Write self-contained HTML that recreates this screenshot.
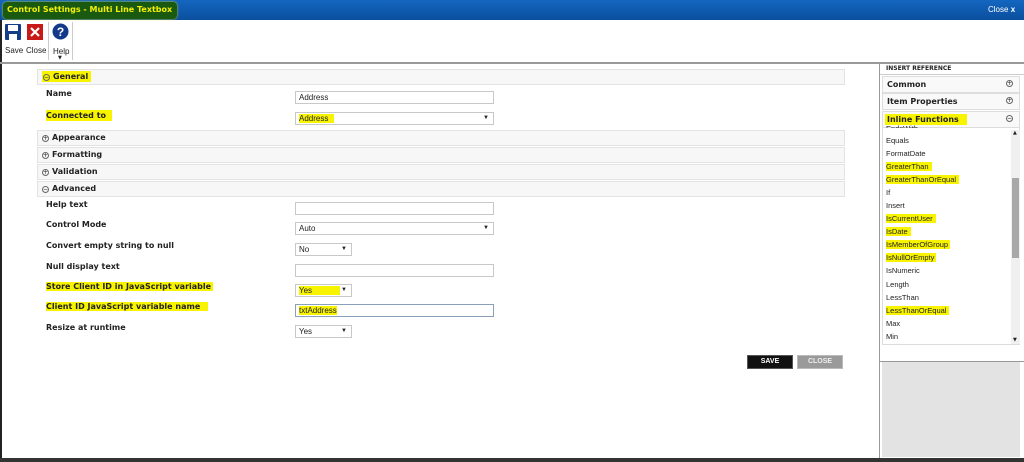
<!DOCTYPE html>
<html><head><style>
*{box-sizing:border-box;margin:0;padding:0}
body{width:1024px;height:462px;overflow:hidden;background:#fff;font-family:"DejaVu Sans","Liberation Sans",sans-serif;font-size:8px;color:#222;position:relative}
.a{position:absolute}
.hl{background:#f8f400}
.sec{position:absolute;left:37px;width:808px;height:16px;background:#f7f7f7;border:1px solid #e3e3e3;font-weight:bold;font-size:8px;line-height:14px;padding-left:4px}
.circ{display:inline-block;width:7px;height:7px;border:1px solid #666;border-radius:50%;font-size:6px;line-height:5px;text-align:center;margin-right:3px;vertical-align:0px;font-weight:normal}
.lbl{position:absolute;left:46px;font-weight:bold;font-size:8px}
.in{position:absolute;left:295px;width:199px;height:13px;border:1px solid #c8c8c8;background:#fff;font-size:8px;line-height:11px;padding-left:3px;font-family:"Liberation Sans",sans-serif}
.sm{width:57px}
.arr{position:absolute;right:4px;top:0;font-size:6px}
.rh{position:absolute;left:882px;width:138px;height:17px;border:1px solid #ddd;background:#f9f9f9;font-weight:bold;font-size:8px;line-height:15px;padding-left:4px}
.rh .circ{position:absolute;right:3px;top:3px}
.li{position:absolute;left:886px;font-size:7.5px;font-family:"Liberation Sans",sans-serif}
</style></head><body>
<div class="a" style="left:0;top:0;width:1024px;height:20px;background:linear-gradient(#1466c0,#0a4f9e)"></div>
<div class="a" style="left:3px;top:2px;width:174px;height:17px;background:#1a5a10;border-radius:4px;box-shadow:0 0 2px #d8d800"></div>
<div class="a" style="left:7px;top:5px;color:#f4f000;font-weight:bold;font-size:8px">Control Settings - Multi Line Textbox</div>
<div class="a" style="left:988px;top:5px;color:#fff;font-size:8px;font-family:'Liberation Sans',sans-serif">Close <b>x</b></div>
<div class="a" style="left:0;top:20px;width:2px;height:442px;background:#222"></div>
<div class="a" style="left:0;top:458px;width:1024px;height:4px;background:#333"></div>
<svg class="a" style="left:5px;top:24px" width="16" height="16"><rect x="0" y="0" width="16" height="16" rx="1" fill="#143e8a"/><rect x="3" y="1" width="10" height="6" fill="#fff"/><rect x="4" y="10" width="8" height="6" fill="#fff"/></svg>
<svg class="a" style="left:27px;top:24px" width="16" height="16"><rect width="16" height="16" fill="#c81818"/><path d="M4 4L12 12M12 4L4 12" stroke="#fff" stroke-width="2.2"/></svg>
<div class="a" style="left:48px;top:22px;width:1px;height:38px;background:#ccc"></div>
<svg class="a" style="left:52px;top:23px" width="17" height="17"><circle cx="8.5" cy="8.5" r="8" fill="#12398a"/><text x="8.5" y="13" text-anchor="middle" fill="#fff" font-size="12" font-weight="bold" font-family="Liberation Sans">?</text></svg>
<div class="a" style="left:72px;top:22px;width:1px;height:38px;background:#ccc"></div>
<div class="a" style="left:5px;top:46px;font-size:8px;font-family:'Liberation Sans',sans-serif">Save</div>
<div class="a" style="left:26px;top:46px;font-size:8px;font-family:'Liberation Sans',sans-serif">Close</div>
<div class="a" style="left:53px;top:47px;font-size:8px;font-family:'Liberation Sans',sans-serif">Help</div>
<div class="a" style="left:58px;top:55px;font-size:5px">▼</div>
<div class="a" style="left:0;top:62px;width:1024px;height:2px;background:#999"></div>
<div class="sec" style="top:69px"><span class="hl" style="padding:1px 3px 1px 1px"><span class="circ">−</span>General</span></div>
<div class="lbl" style="top:89px">Name</div>
<div class="in" style="top:91px">Address</div>
<div class="lbl hl" style="top:110px;padding:1px 6px 1px 0">Connected to</div>
<div class="in" style="top:112px"><span class="hl" style="padding-right:6px">Address</span><span class="arr">▼</span></div>
<div class="sec" style="top:130px"><span class="circ">+</span>Appearance</div>
<div class="sec" style="top:147px"><span class="circ">+</span>Formatting</div>
<div class="sec" style="top:164px"><span class="circ">+</span>Validation</div>
<div class="sec" style="top:181px"><span class="circ">−</span>Advanced</div>
<div class="lbl" style="top:200px">Help text</div>
<div class="in" style="top:202px"></div>
<div class="lbl" style="top:220px">Control Mode</div>
<div class="in" style="top:222px">Auto<span class="arr">▼</span></div>
<div class="lbl" style="top:241px">Convert empty string to null</div>
<div class="in sm" style="top:243px">No<span class="arr">▼</span></div>
<div class="lbl" style="top:262px">Null display text</div>
<div class="in" style="top:264px"></div>
<div class="lbl hl" style="top:282px;padding-right:2px">Store Client ID in JavaScript variable</div>
<div class="in sm" style="top:284px"><span class="hl" style="padding-right:28px">Yes</span><span class="arr">▼</span></div>
<div class="lbl hl" style="top:302px;padding-right:8px">Client ID JavaScript variable name</div>
<div class="in" style="top:304px;border-color:#8aa0b8"><span class="hl">txtAddress</span></div>
<div class="lbl" style="top:323px">Resize at runtime</div>
<div class="in sm" style="top:325px">Yes<span class="arr">▼</span></div>
<div class="a" style="left:747px;top:355px;width:46px;height:14px;background:#111;border:1px solid #555;color:#fff;font-size:7px;font-weight:bold;text-align:center;line-height:12px;font-family:'Liberation Sans',sans-serif">SAVE</div>
<div class="a" style="left:797px;top:355px;width:46px;height:14px;background:#9a9a9a;border:1px solid #bbb;color:#eee;font-size:7px;font-weight:bold;text-align:center;line-height:12px;font-family:'Liberation Sans',sans-serif">CLOSE</div>
<div class="a" style="left:879px;top:64px;width:1px;height:394px;background:#999"></div>
<div class="a" style="left:886px;top:65px;font-size:6px;font-weight:bold">INSERT REFERENCE</div>
<div class="a" style="left:880px;top:74px;width:144px;height:1px;background:#ccc"></div>
<div class="rh" style="top:76px">Common<span class="circ">+</span></div>
<div class="rh" style="top:93px">Item Properties<span class="circ">+</span></div>
<div class="rh" style="top:111px"><span class="hl" style="padding:1px 8px 1px 2px;margin-left:-2px">Inline Functions</span><span class="circ">−</span></div>
<div class="a" style="left:882px;top:128px;width:138px;height:217px;border:1px solid #ddd;border-top:none"></div>
<div class="a" style="left:1011px;top:130px;width:9px;height:214px;background:#f0f0f0"></div>
<div class="a" style="left:1012px;top:178px;width:7px;height:80px;background:#a8a8a8"></div>
<div class="a" style="left:1013px;top:130px;font-size:5px">▲</div>
<div class="a" style="left:1013px;top:337px;font-size:5px">▼</div>
<div class="li" style="top:124px;height:4px;overflow:hidden">EndsWith</div>
<div class="li" style="top:136px">Equals</div>
<div class="li" style="top:149px">FormatDate</div>
<div class="li hl" style="top:162px;padding-right:3px">GreaterThan</div>
<div class="li hl" style="top:175px;padding-right:3px">GreaterThanOrEqual</div>
<div class="li" style="top:188px">If</div>
<div class="li" style="top:201px">Insert</div>
<div class="li hl" style="top:214px;padding-right:3px">IsCurrentUser</div>
<div class="li hl" style="top:227px;padding-right:3px">IsDate</div>
<div class="li hl" style="top:240px;padding-right:2px">IsMemberOfGroup</div>
<div class="li hl" style="top:253px;padding-right:2px">IsNullOrEmpty</div>
<div class="li" style="top:266px">IsNumeric</div>
<div class="li" style="top:280px">Length</div>
<div class="li" style="top:293px">LessThan</div>
<div class="li hl" style="top:306px;padding-right:3px">LessThanOrEqual</div>
<div class="li" style="top:319px">Max</div>
<div class="li" style="top:332px">Min</div>
<div class="a" style="left:880px;top:361px;width:144px;height:1px;background:#999"></div>
<div class="a" style="left:882px;top:362px;width:138px;height:95px;background:#e2e3e2"></div>
</body></html>
